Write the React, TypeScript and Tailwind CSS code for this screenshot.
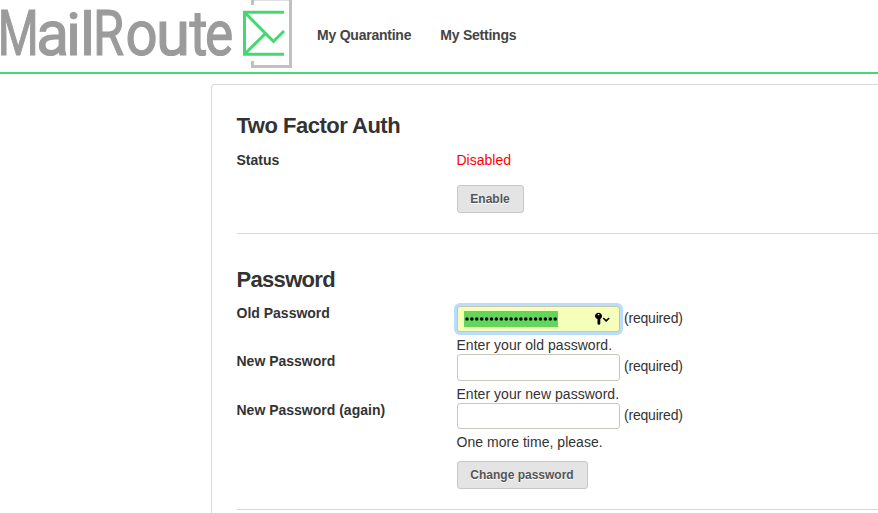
import type { ReactNode } from 'react';

const WORDMARK = [
  { char: 'M', x: -2.2, width: 41, size: 63 },
  { char: 'a', x: 36.2, width: 32.8, size: 63 },
  { char: 'i', x: 66, width: 15, size: 60 },
  { char: 'l', x: 80, width: 15, size: 59 },
  { char: 'R', x: 93, width: 31, size: 63 },
  { char: 'o', x: 125.5, width: 32.1, size: 63 },
  { char: 'u', x: 156, width: 34, size: 63 },
  { char: 't', x: 189.6, width: 18, size: 63 },
  { char: 'e', x: 205, width: 28.2, size: 63 },
];

function Logo() {
  return (
    <svg width="292" height="72" viewBox="0 0 292 72" className="block shrink-0 overflow-visible" aria-label="MailRoute">
      <text
        y="55.2"
        fontWeight="400"
        fill="#9b9b9b"
        stroke="#9b9b9b"
        strokeWidth="1.2"
        className="font-['Roboto',sans-serif]"
      >
        {WORDMARK.map(({ char, x, width, size }) => (
          <tspan key={char} x={x} fontSize={size} textLength={width} lengthAdjust="spacingAndGlyphs">
            {char}
          </tspan>
        ))}
      </text>
      <path d="M252.5 5V-1H290.5V66.5H252.5V61" fill="none" stroke="#c0c0c0" strokeWidth="3" />
      <path
        d="M284 12.3H244.5V54.3H284M244.5 12.3L273.5 41.5L284 31M244.5 54.3L265.5 33.5"
        fill="none"
        stroke="#43d872"
        strokeWidth="3"
      />
    </svg>
  );
}

function Row({ label, children, className }: { label: string; children: ReactNode; className: string }) {
  return (
    <div className={`flex ${className}`}>
      <div className="w-[220px] shrink-0 font-bold leading-[18px]">{label}</div>
      <div>{children}</div>
    </div>
  );
}

function Button({ children, className }: { children: ReactNode; className: string }) {
  return (
    <button
      className={`block h-7 rounded-[3px] border border-[#c8c8c8] bg-[#e4e4e4] text-[12px] font-bold text-[#555] [text-shadow:0_1px_0_#fff] ${className}`}
    >
      {children}
    </button>
  );
}

function Field({ hint, filled, className }: { hint: string; filled?: boolean; className: string }) {
  return (
    <>
      <div className={`flex gap-[4.5px] ${className}`}>
        <div
          className={
            filled
              ? 'flex h-full w-[163px] items-center rounded-[3px] border border-[#c5c9a5] bg-[#f5ffba] px-[6px] shadow-[0_0_0_3px_#b9dcff]'
              : 'h-full w-[163px] rounded-[3px] border border-[#c8c8b8] bg-white'
          }
        >
          {filled && (
            <>
              <svg width="94" height="16" viewBox="0 0 94 16" className="shrink-0 bg-[#62d65b]">
                {Array.from({ length: 19 }, (_, i) => (
                  <circle key={i} cx={3 + i * 4.9} cy="8" r="1.75" />
                ))}
              </svg>
              <svg width="16" height="14" viewBox="0 0 16 14" className="ml-9 shrink-0">
                <path
                  fillRule="evenodd"
                  d="M4.5 0.8C6.5 0.8 8 2.2 8 4C8 5.4 7.3 6.3 6.3 6.9V11.8L5.2 13L3.5 12V6.9C2 6.3 1 5.4 1 4C1 2.2 2.5 0.8 4.5 0.8ZM3.8 2V3.2H5.3V2Z"
                />
                <path d="M9.2 6L12.2 8.8L15.2 6" fill="none" stroke="black" strokeWidth="1.6" />
              </svg>
            </>
          )}
        </div>
        <span className="pt-[3px] leading-[18px] tracking-[-0.2px]">(required)</span>
      </div>
      <div className="mt-[5px] h-[17px] whitespace-nowrap leading-[17px] tracking-[0.03px]">{hint}</div>
    </>
  );
}

export default function App() {
  return (
    <div className="flex h-[513px] w-[878px] flex-col overflow-hidden bg-white font-['Liberation_Sans',Arial,sans-serif] text-[14px] text-[#333]">
      <header className="flex h-[74px] shrink-0 border-b-2 border-[#43d872]">
        <Logo />
        <nav className="ml-[25px] mt-[26px] flex gap-[29px] font-bold leading-[18px] tracking-[-0.23px] text-[#444]">
          <a>My Quarantine</a>
          <a>My Settings</a>
        </nav>
      </header>
      <main className="ml-[211px] mt-[10px] grow rounded-tl-[4px] border-l border-t border-[#d8d8d8] pl-[24.5px]">
        <h2 className="mt-7 text-[22px] font-bold leading-[26px] tracking-[-0.5px]">Two Factor Auth</h2>
        <Row label="Status" className="mt-3">
          <div className="leading-[18px] text-[#f00]">Disabled</div>
          <Button className="mt-4 w-[67px]">Enable</Button>
        </Row>
        <hr className="mt-5 border-[#d8d8d8]" />
        <h2 className="mt-[33px] text-[22px] font-bold leading-[26px] tracking-[-0.68px]">Password</h2>
        <Row label="Old Password" className="mt-[11px]">
          <div className="pt-[2px]">
            <Field hint="Enter your old password." filled className="h-[26px]" />
          </div>
        </Row>
        <Row label="New Password" className="-mt-[2px]">
          <div className="pt-[2px]">
            <Field hint="Enter your new password." className="h-[27px]" />
          </div>
        </Row>
        <Row label="New Password (again)" className="-mt-[2px]">
          <div className="pt-[2px]">
            <Field hint="One more time, please." className="h-[26px]" />
          </div>
          <Button className="mt-[10px] w-[131px]">Change password</Button>
        </Row>
        <hr className="mt-5 border-[#d8d8d8]" />
      </main>
    </div>
  );
}
